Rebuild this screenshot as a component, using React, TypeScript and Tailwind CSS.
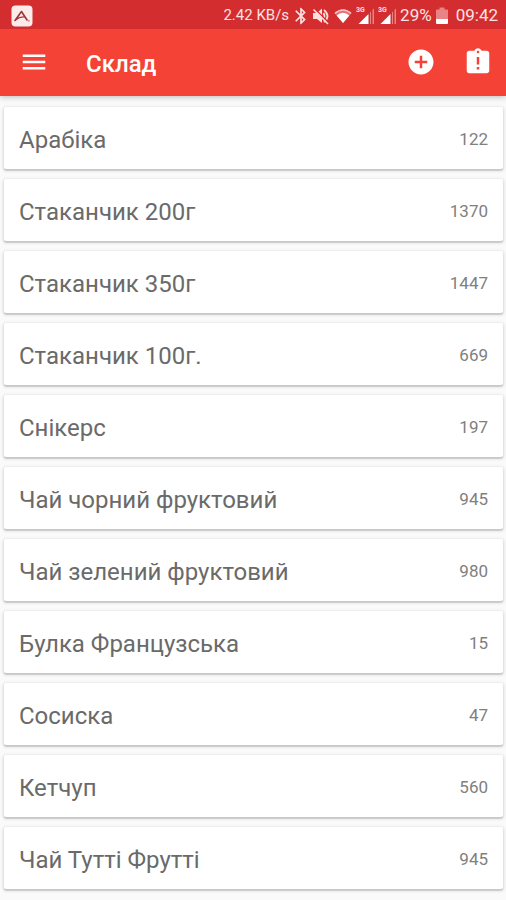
import { MdAddCircle, MdAssignmentLate, MdBluetooth, MdMenu } from "react-icons/md";


interface StockItem {
    name: string,
    amount: number
}


const items: StockItem[] = [
    { name: "Арабіка", amount: 122 },
    { name: "Стаканчик 200г", amount: 1370 },
    { name: "Стаканчик 350г", amount: 1447 },
    { name: "Стаканчик 100г.", amount: 669 },
    { name: "Снікерс", amount: 197 },
    { name: "Чай чорний фруктовий", amount: 945 },
    { name: "Чай зелений фруктовий", amount: 980 },
    { name: "Булка Французська", amount: 15 },
    { name: "Сосиска", amount: 47 },
    { name: "Кетчуп", amount: 560 },
    { name: "Чай Тутті Фрутті", amount: 945 }
]

function AppBadge() {
    return (
        <svg className="size-[22px]" viewBox="0 0 22 22" fill="none" aria-hidden="true">
            <rect x="0.5" y="0.5" width="21" height="21" rx="4" fill="#fbecec" />
            <path d="M4 15.5 L10.5 6.5 L16 15" stroke="#a33236" strokeWidth="1.6" strokeLinejoin="round" strokeLinecap="round" />
            <path d="M4.5 15 C7.5 12.5 10.5 11.5 14 12" stroke="#a33236" strokeWidth="1.1" />
            <circle cx="17.8" cy="15.8" r="1" fill="#d98a8c" />
        </svg>
    );
}

function MutedIcon() {
    return (
        <svg className="size-[18px]" viewBox="0 0 18 18" fill="none" aria-hidden="true">
            <path d="M1 6 H5 L10 1.5 V16 L5 12 H1 Z" fill="#fbdfdf" />
            <path d="M11.5 6 Q13.5 9 11.5 12 M12 2.8 Q19 9 12 15.2" stroke="#fbdfdf" strokeWidth="1.8" />
            <path d="M2.5 1.5 L17 16" stroke="#d32d2f" strokeWidth="1.4" />
            <path d="M1.5 2.5 L16 17" stroke="#fbdfdf" strokeWidth="1.6" />
        </svg>
    );
}

function WifiIcon() {
    return (
        <svg className="h-[16px] w-[18px]" viewBox="0 0 18 16" aria-hidden="true">
            <path d="M0.5 5 Q9 -2.5 17.5 5 L9 15 Z" fill="#e57373" />
            <path d="M2.6 7.4 Q9 2 15.4 7.4 L9 15 Z" fill="#fff" />
            <path d="M0.5 5 Q9 -2.5 17.5 5 L16.6 6 Q9 -0.3 1.4 6 Z" fill="#f6c4c4" />
        </svg>
    );
}

function SignalIcon() {
    return (
        <svg className="size-[18px]" viewBox="0 0 18 18" aria-hidden="true">
            <path d="M14 5.5 L15 4.5 V17 H14 Z M16.5 3 L18 1.5 V17 H16.5 Z" fill="#e98486" />
            <path d="M12.5 7 V17 H2.5 Z" fill="#fff" />
            <text x="0" y="5" fontFamily="Roboto, sans-serif" fontSize="7" fontWeight="700" fill="#fbdfdf">3G</text>
        </svg>
    );
}

function BatteryIcon() {
    return (
        <svg className="h-[18px] w-[12px]" viewBox="0 0 12 18" aria-hidden="true">
            <path d="M3.5 0.5 H8.5 V2.5 H11 Q12 2.5 12 3.5 V12 H0 V3.5 Q0 2.5 1 2.5 H3.5 Z" fill="#e98486" />
            <path d="M0 12 H12 V16 Q12 17 11 17 H1 Q0 17 0 16 Z" fill="#fff" />
        </svg>
    );
}

function StatusBar() {
    return (
        <div className="flex h-[29px] items-center justify-between bg-[#d32d2f] pt-[2px] pr-2 pl-[11px] text-[#fbe3e3]">
            <AppBadge />
            <div className="flex items-center gap-1">
                <span className="text-[15px]">2.42 KB/s</span>
                <span className="flex w-[15px] justify-center">
                    <MdBluetooth className="size-5 shrink-0 stroke-current" />
                </span>
                <MutedIcon />
                <WifiIcon />
                <SignalIcon />
                <SignalIcon />
                <span className="text-[17px]">29%</span>
                <BatteryIcon />
                <span className="pl-1 text-[17px]">09:42</span>
            </div>
        </div>
    );
}

export default function App() {
    return (
        <div className="flex min-h-screen w-full flex-col bg-[#fafafa] font-[Roboto,sans-serif]">
            <header className="flex flex-col bg-[#f44336] shadow-[0_1px_6px_rgba(0,0,0,0.25)]">
                <StatusBar />
                <div className="flex h-[67px] items-center pr-[13px] pb-[2px] pl-[19px] text-white">
                    <button type="button" aria-label="Меню">
                        <MdMenu className="size-[30px]" />
                    </button>
                    <h1 className="grow pt-1 pl-[37px] text-[24px] font-medium">Склад</h1>
                    <div className="flex items-center gap-[27px]">
                        <button type="button" aria-label="Додати">
                            <MdAddCircle className="size-[30px]" />
                        </button>
                        <button type="button" aria-label="Звіт">
                            <MdAssignmentLate className="size-[30px]" />
                        </button>
                    </div>
                </div>
            </header>
            <ul className="flex flex-col gap-[10px] pt-[11px] pr-[3px] pb-2 pl-1">
                {items.map((item) => (
                    <li
                        key={item.name}
                        className="flex h-[62px] items-center justify-between rounded-[2px] bg-white px-[15px] pt-[3px] text-[#6a6a6a] shadow-[0_1px_3px_1px_rgba(0,0,0,0.13),0_2px_1px_rgba(0,0,0,0.1)]"
                    >
                        <span className="text-[24px]">{item.name}</span>
                        <span className="text-[17px] text-[#808080]">{item.amount}</span>
                    </li>
                ))}
            </ul>
        </div>
    );
}
